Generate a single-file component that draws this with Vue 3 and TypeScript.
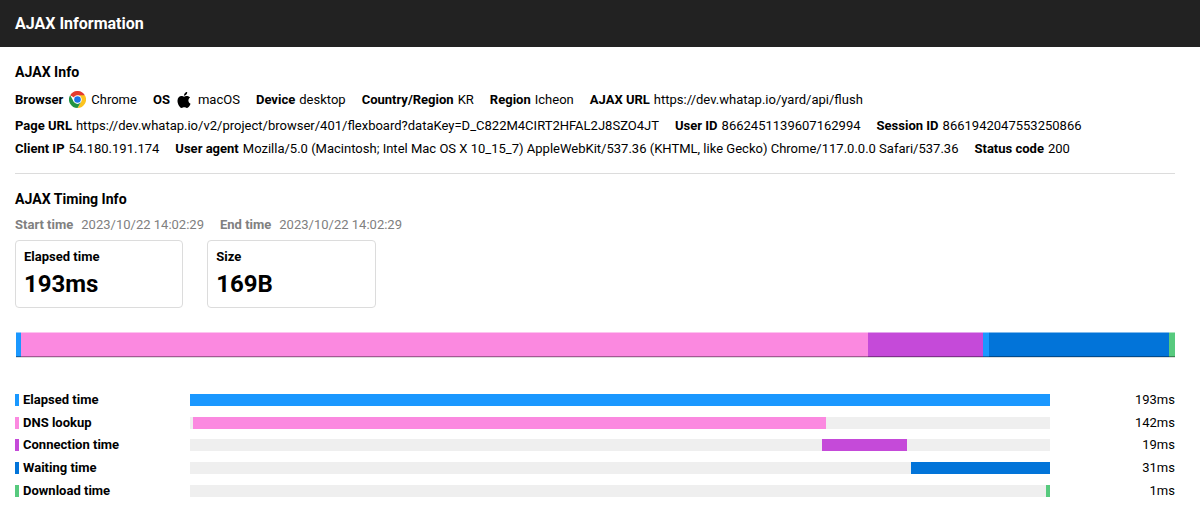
<script setup lang="ts">
interface Field {
  label: string
  value: string
  icon?: 'chrome' | 'apple'
}

interface Timing {
  label: string
  value: string
  color: string
  start: number
  width: number
}

const infoRows: Field[][] = [
  [
    { label: 'Browser', value: 'Chrome', icon: 'chrome' },
    { label: 'OS', value: 'macOS', icon: 'apple' },
    { label: 'Device', value: 'desktop' },
    { label: 'Country/Region', value: 'KR' },
    { label: 'Region', value: 'Icheon' },
    { label: 'AJAX URL', value: 'https://dev.whatap.io/yard/api/flush' },
  ],
  [
    {
      label: 'Page URL',
      value: 'https://dev.whatap.io/v2/project/browser/401/flexboard?dataKey=D_C822M4CIRT2HFAL2J8SZO4JT',
    },
    { label: 'User ID', value: '8662451139607162994' },
    { label: 'Session ID', value: '8661942047553250866' },
  ],
  [
    { label: 'Client IP', value: '54.180.191.174' },
    {
      label: 'User agent',
      value:
        'Mozilla/5.0 (Macintosh; Intel Mac OS X 10_15_7) AppleWebKit/537.36 (KHTML, like Gecko) Chrome/117.0.0.0 Safari/537.36',
    },
    { label: 'Status code', value: '200' },
  ],
]

const period: Field[] = [
  { label: 'Start time', value: '2023/10/22 14:02:29' },
  { label: 'End time', value: '2023/10/22 14:02:29' },
]

const cards: Field[] = [
  { label: 'Elapsed time', value: '193ms' },
  { label: 'Size', value: '169B' },
]

const BLUE = '#1a98ff'
const PINK = '#fb89e0'
const PURPLE = '#c54ad9'
const NAVY = '#0274d9'
const GREEN = '#57ca7e'

// Widths are shares of the whole 1159px strip.
const segments = [
  { color: BLUE, size: 5.2 },
  { color: PINK, size: 847 },
  { color: PURPLE, size: 114.8 },
  { color: BLUE, size: 6 },
  { color: NAVY, size: 180 },
  { color: GREEN, size: 6 },
]

// Offsets and widths are percentages of the track.
const timings: Timing[] = [
  { label: 'Elapsed time', value: '193ms', color: BLUE, start: 0.09, width: 99.91 },
  { label: 'DNS lookup', value: '142ms', color: PINK, start: 0.42, width: 73.6 },
  { label: 'Connection time', value: '19ms', color: PURPLE, start: 73.5, width: 9.93 },
  { label: 'Waiting time', value: '31ms', color: NAVY, start: 83.9, width: 16.1 },
  { label: 'Download time', value: '1ms', color: GREEN, start: 99.5, width: 0.5 },
]
</script>

<template>
  <div class="page">
    <header class="topbar">AJAX Information</header>
    <main class="content">
      <section class="info">
        <h2 class="heading">AJAX Info</h2>
        <div v-for="(row, i) in infoRows" :key="i" class="info-row">
          <div v-for="field in row" :key="field.label" class="field">
            <b>{{ field.label }}</b>
            <svg v-if="field.icon === 'chrome'" class="icon chrome" viewBox="0 0 48 48">
              <path fill="#e33b2e" d="M24 24 3.2 12A24 24 0 0 1 44.8 12Z" />
              <path fill="#fcc31e" d="M24 12H44.8A24 24 0 0 1 24 48L34.4 30Z" />
              <path fill="#229342" d="M3.2 12 13.6 30 24 36l10.4-6L24 48A24 24 0 0 1 3.2 12Z" />
              <circle cx="24" cy="24" r="12" fill="#fff" />
              <circle cx="24" cy="24" r="9.3" fill="#1a73e8" />
            </svg>
            <svg v-else-if="field.icon === 'apple'" class="icon apple" viewBox="0 0 814 1000">
              <path
                d="M788 341c-6 4.500-108 62-108 190 0 148 130 201 134 202-.6 3.200-21 72-69 142-42.700 61-87 123-155 123s-86-40-164-40c-77 0-104 41-166 41s-106-57-155-127C48 790 0 664 0 543c0-193 125-296 249-296 66 0 121 43 162 43 39 0 101-46 176-46 29 0 131 3 201 97ZM555 160c31-37 53-88 53-139 0-7-.6-14-2-20-51 2-111 34-147 76-28 32-55 83-55 135 0 8 1.300 16 2 18 3 .6 8 1.300 14 1.300 45 0 102-30 135-71.300Z"
              />
            </svg>
            <span>{{ field.value }}</span>
          </div>
        </div>
      </section>

      <section class="timing">
        <h2 class="heading">AJAX Timing Info</h2>
        <div class="period">
          <div v-for="field in period" :key="field.label" class="field">
            <b>{{ field.label }}</b>
            <span>{{ field.value }}</span>
          </div>
        </div>
        <div class="cards">
          <div v-for="card in cards" :key="card.label" class="card">
            <div class="card-label">{{ card.label }}</div>
            <div class="card-value">{{ card.value }}</div>
          </div>
        </div>

        <div class="strip">
          <div
            v-for="(segment, i) in segments"
            :key="i"
            class="segment"
            :style="{ flexGrow: segment.size, backgroundColor: segment.color }"
          ></div>
        </div>

        <div class="rows">
          <div v-for="item in timings" :key="item.label" class="row">
            <div class="row-label">
              <i class="swatch" :style="{ background: item.color }"></i>
              <b>{{ item.label }}</b>
            </div>
            <div class="track">
              <div
                class="fill"
                :style="{ marginLeft: item.start + '%', width: item.width + '%', background: item.color }"
              ></div>
            </div>
            <div class="row-value">{{ item.value }}</div>
          </div>
        </div>
      </section>
    </main>
  </div>
</template>

<style>
body {
  margin: 0;
  background: #fff;
}
</style>

<style scoped>
.page {
  height: 519px;
  overflow: hidden;
  background: #fff;
  color: #000;
  font-family: Roboto, "Liberation Sans", sans-serif;
  font-size: 13.025px;
  line-height: 20px;
}

b {
  font-weight: 700;
}

.topbar {
  box-sizing: border-box;
  height: 47px;
  padding: 0 15px;
  background: #222;
  color: #fff;
  font-size: 16px;
  font-weight: 700;
  line-height: 47px;
}

.content {
  padding: 0 25px 0 15px;
}

.info {
  height: 126px;
  border-bottom: 1px solid #dcdcdc;
}

.heading {
  margin: 0;
  font-size: 14.1px;
  font-weight: 700;
  line-height: 20px;
}

.info .heading {
  padding-top: 15px;
}

.info-row {
  display: flex;
  gap: 16px;
  height: 24px;
  line-height: 24px;
  white-space: nowrap;
}

.info-row:nth-child(2) {
  height: 25px;
  margin-top: 5px;
}

.info-row:nth-child(3) {
  height: 23px;
  margin-top: 2px;
}

.field {
  display: flex;
  gap: 4px;
}

.info-row:nth-child(2) .field {
  align-items: center;
}

.chrome {
  width: 17px;
  height: 17px;
  margin: 0 1.5px;
}

.apple {
  width: 14px;
  height: 16px;
  margin: 0 3px;
}

.timing {
  padding-top: 15px;
}

.period {
  display: flex;
  gap: 16px;
  height: 20px;
  margin-top: 6px;
  color: #808080;
}

.period .field {
  gap: 8px;
}

.cards {
  display: flex;
  gap: 24px;
  margin-top: 5px;
}

.card {
  box-sizing: border-box;
  width: 168.3px;
  height: 68px;
  padding: 6px 8px;
  border: 1px solid #dcdcdc;
  border-radius: 4px;
}

.card-label {
  font-weight: 700;
  line-height: 20px;
}

.card-value {
  font-size: 24px;
  font-weight: 700;
  line-height: 34px;
}

.strip {
  display: flex;
  height: 25px;
  margin: 24px 0 0 1px;
  box-shadow: 0 1px 0 #dedede;
}

.segment {
  border-top: 1px solid rgba(255, 255, 255, 0.5);
  border-bottom: 1px solid rgba(0, 0, 0, 0.35);
}

.rows {
  display: flex;
  flex-direction: column;
  gap: 2.7px;
  margin-top: 33px;
}

.row {
  display: flex;
  align-items: center;
  height: 20px;
}

.row-label {
  display: flex;
  align-items: center;
  gap: 4px;
  width: 174.5px;
}

.swatch {
  width: 4px;
  height: 12px;
}

.track {
  width: 860.5px;
  height: 12px;
  background: #efefef;
}

.fill {
  height: 100%;
}

.row-value {
  flex: 1;
  text-align: right;
}
</style>
